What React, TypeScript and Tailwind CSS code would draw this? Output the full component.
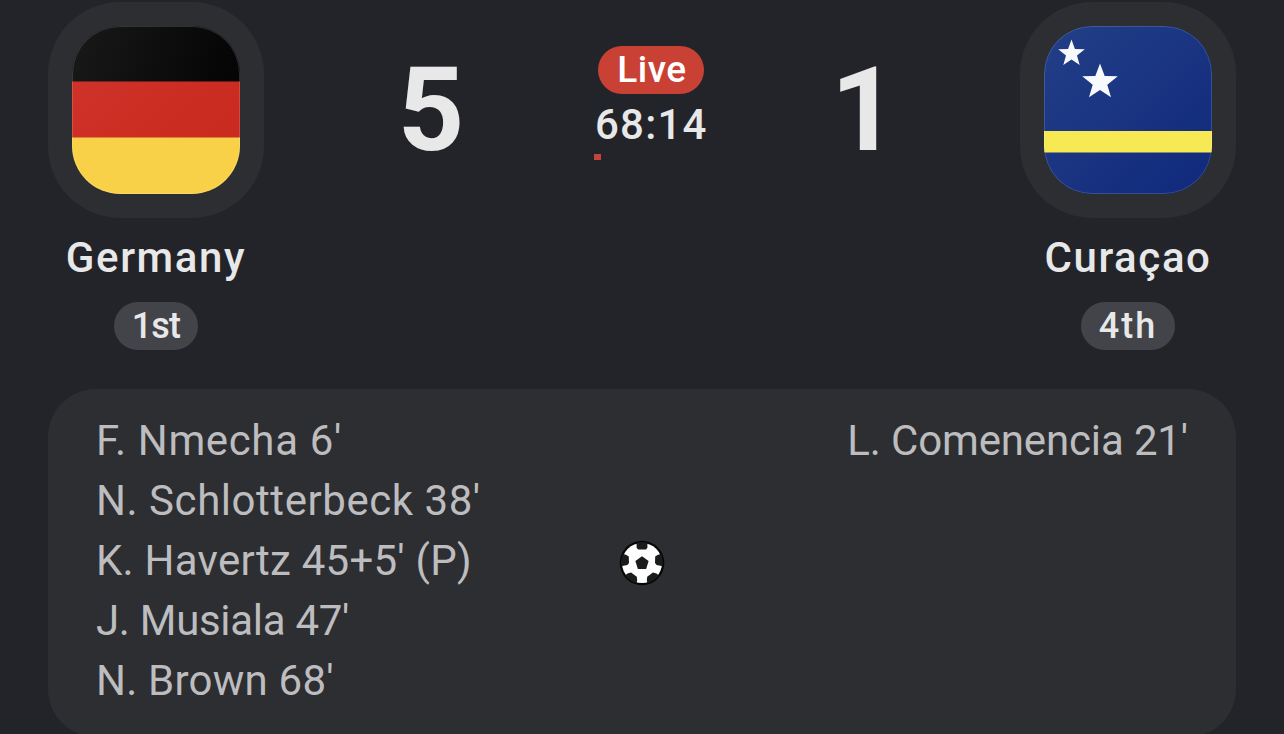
import type { ReactNode } from 'react'
import clsx from 'clsx'

interface Goal {
  label: string
  tracking: string
}

interface TeamProps {
  name: string
  rank: string
  nameClass: string
  rankClass: string
  children: ReactNode
}

const homeGoals: Goal[] = [
  { label: "F. Nmecha 6'", tracking: 'tracking-[0.63px]' },
  { label: "N. Schlotterbeck 38'", tracking: 'tracking-[0.55px]' },
  { label: "K. Havertz 45+5' (P)", tracking: 'tracking-[0.25px]' },
  { label: "J. Musiala 47'", tracking: 'tracking-[-0.3px]' },
  { label: "N. Brown 68'", tracking: 'tracking-[0.22px]' },
]

const awayGoals: Goal[] = [{ label: "L. Comenencia 21'", tracking: 'tracking-[-0.15px]' }]

function GermanyFlag() {
  return (
    <svg viewBox="0 0 168 168" className="size-full">
      <defs>
        <linearGradient id="de-black" x1="0" y1="0" x2="1" y2="0.1">
          <stop offset="0" stopColor="#191919" />
          <stop offset="1" stopColor="#050505" />
        </linearGradient>
        <linearGradient id="de-red" x1="0" y1="0" x2="1" y2="0.4">
          <stop offset="0" stopColor="#cf3229" />
          <stop offset="1" stopColor="#ca2b20" />
        </linearGradient>
      </defs>
      <rect width="168" height="56" fill="url(#de-black)" />
      <rect y="55.5" width="168" height="57" fill="url(#de-red)" />
      <rect y="111.5" width="168" height="57" fill="#f8d148" />
    </svg>
  )
}

function CuracaoFlag() {
  return (
    <svg viewBox="0 0 168 168" className="size-full">
      <defs>
        <linearGradient id="cw-blue" x1="0" y1="0" x2="1" y2="1">
          <stop offset="0" stopColor="#233f87" />
          <stop offset="1" stopColor="#10297c" />
        </linearGradient>
      </defs>
      <rect width="168" height="168" fill="url(#cw-blue)" />
      <rect y="105" width="168" height="21.5" fill="#f6e954" />
      <path
        fill="#f8f9fd"
        d="M27.5 13.5 30.9 23 40.8 23.3 33 29.5 35.7 38.9 27.5 33.5 19.3 38.9 22 29.5 14.2 23.3 24.1 23Z"
      />
      <path
        fill="#f8f9fd"
        d="M56 37.5 60.7 50 73.8 50.3 63.3 58.8 67 71.3 56 64 45 71.3 48.7 58.8 38.2 50.3 51.3 50Z"
      />
    </svg>
  )
}

function SoccerBall() {
  return (
    <svg viewBox="0 0 46 46" className="size-[46px]">
      <defs>
        <clipPath id="ball">
          <circle cx="23" cy="23" r="21" />
        </clipPath>
      </defs>
      <circle cx="23" cy="23" r="22.3" fill="#050505" />
      <circle cx="23" cy="23" r="20" fill="#fff" />
      <g fill="#1b1b1c" clipPath="url(#ball)">
        <path d="M23 16.3 29.6 21.1 27.1 29 18.9 29 16.4 21.1Z" />
        <path d="M17.6 1 17.6 7.5 19 9.4 27 9.4 28.4 7.5 28.4 1Z" />
        <path d="M46 12.5 38.5 15 36.2 16.6 36 23 37.6 25 46 26.5Z" />
        <path d="M0 12.5 7.5 15 9.8 16.6 10 23 8.4 25 0 26.5Z" />
        <path d="M8.5 33.6 12 32.6 17.8 36.8 18.2 40 17 46 3 38Z" />
        <path d="M37.5 33.6 34 32.6 28.2 36.8 27.8 40 29 46 43 38Z" />
      </g>
    </svg>
  )
}

function Team({ name, rank, nameClass, rankClass, children }: TeamProps) {
  return (
    <div className="flex flex-col items-center">
      <div className="size-[216px] rounded-[72px] bg-[#2d2e32] p-6">
        <div className="relative size-[168px] overflow-hidden rounded-[48px]">
          {children}
          <div className="absolute inset-0 rounded-[48px] border border-white/15" />
        </div>
      </div>
      <h2 className={clsx('mt-3 whitespace-nowrap text-[42px] font-medium leading-[56px]', nameClass)}>{name}</h2>
      <span
        className={clsx(
          'mt-4 flex h-12 items-center justify-center rounded-full bg-[#42444a] pb-px text-[36px] font-medium leading-none',
          rankClass
        )}
      >
        {rank}
      </span>
    </div>
  )
}

function GoalList({ goals, className }: { goals: Goal[]; className?: string }) {
  return (
    <ul className={className}>
      {goals.map((goal) => (
        <li key={goal.label} className={clsx('h-[60px] whitespace-nowrap leading-[56px]', goal.tracking)}>
          {goal.label}
        </li>
      ))}
    </ul>
  )
}

export default function App() {
  return (
    <main className="h-[734px] w-[1284px] overflow-hidden bg-[#232429] px-12 pt-0.5 font-['Roboto',sans-serif] text-[#e8e8e9]">
      <section className="grid h-[387px] grid-cols-[216px_330px_114px_312px_216px] items-start">
        <Team name="Germany" rank="1st" nameClass="tracking-[1.6px]" rankClass="w-[84px] tracking-[-0.8px]">
          <GermanyFlag />
        </Team>
        <div className="mt-[50px] pl-1 text-center text-[116px] font-bold leading-[116px]">5</div>
        <div className="mt-11 flex flex-col items-start">
          <span className="ml-1 flex h-12 w-[106px] items-center justify-center rounded-full bg-[#c94134] pb-0.5 pl-0.5 text-[37px] font-medium leading-none tracking-[0.5px] text-white">
            Live
          </span>
          <span className="ml-px mt-1 whitespace-nowrap text-[42px] font-medium leading-[54px] tracking-[1.2px]">
            68:14
          </span>
          <span className="mt-0.5 h-1.5 w-[7px] bg-[#c0453a]" />
        </div>
        <div className="mt-[50px] text-center text-[116px] font-bold leading-[116px]">1</div>
        <Team name="Curaçao" rank="4th" nameClass="tracking-[1.6px]" rankClass="w-[94px] tracking-[2px]">
          <CuracaoFlag />
        </Team>
      </section>

      <section className="grid h-[348px] grid-cols-[1fr_46px_1fr] rounded-[48px] bg-[#2d2e32] px-12 py-6 text-[42px] text-[#bdbdbf]">
        <GoalList goals={homeGoals} />
        <div className="flex items-center">
          <SoccerBall />
        </div>
        <GoalList goals={awayGoals} className="text-right" />
      </section>
    </main>
  )
}
